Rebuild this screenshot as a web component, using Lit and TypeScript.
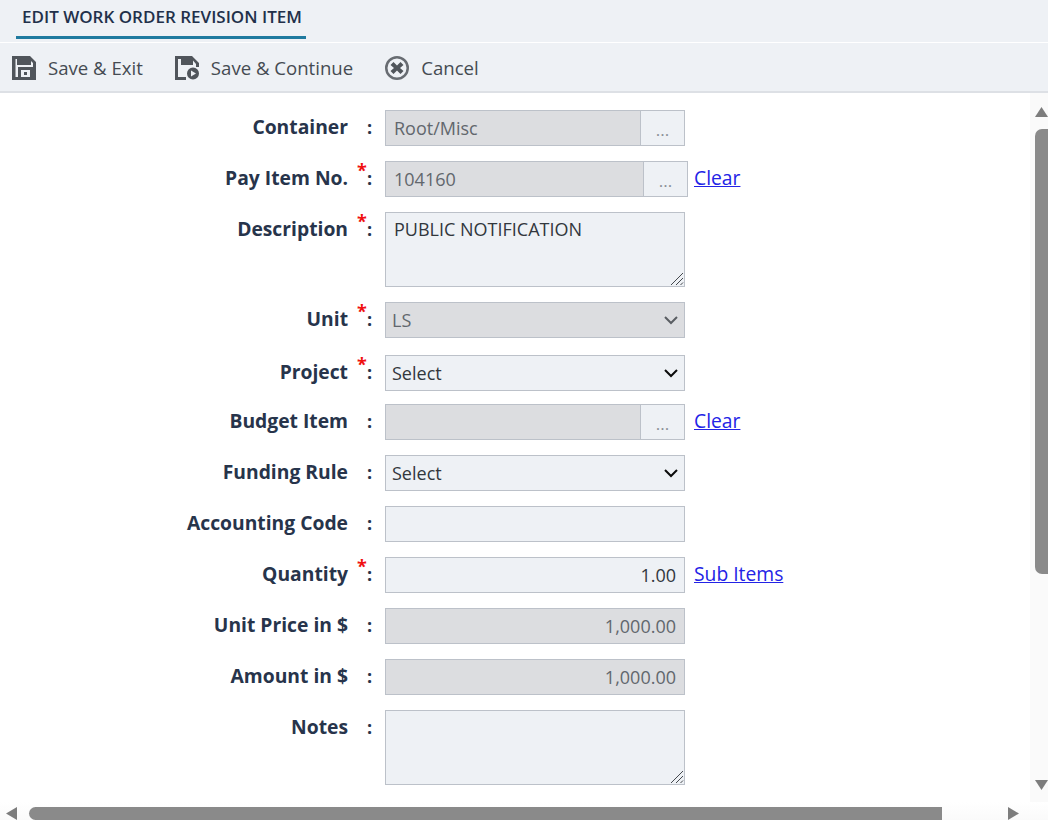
import { LitElement, css, html, nothing } from 'lit';
import { customElement } from 'lit/decorators.js';

type Row = {
  label: string;
  required?: boolean;
  kind: 'lookup' | 'text' | 'area' | 'select';
  value?: string;
  disabled?: boolean;
  wide?: boolean;
  number?: boolean;
  link?: string;
  shift?: boolean;
};

const rows: Row[] = [
  { label: 'Container', kind: 'lookup', value: 'Root/Misc' },
  { label: 'Pay Item No.', required: true, kind: 'lookup', value: '104160', wide: true, link: 'Clear' },
  { label: 'Description', required: true, kind: 'area', value: 'PUBLIC NOTIFICATION' },
  { label: 'Unit', required: true, kind: 'select', value: 'LS', disabled: true },
  { label: 'Project', required: true, kind: 'select', value: 'Select', shift: true },
  { label: 'Budget Item', kind: 'lookup', value: '', link: 'Clear' },
  { label: 'Funding Rule', kind: 'select', value: 'Select' },
  { label: 'Accounting Code', kind: 'text', value: '' },
  { label: 'Quantity', required: true, kind: 'text', value: '1.00', number: true, link: 'Sub Items' },
  { label: 'Unit Price in $', kind: 'text', value: '1,000.00', number: true, disabled: true },
  { label: 'Amount in $', kind: 'text', value: '1,000.00', number: true, disabled: true },
  { label: 'Notes', kind: 'area', value: '' },
];

@customElement('app-root')
export class AppRoot extends LitElement {
  static styles = css`
    :host {
      display: flex;
      flex-direction: column;
      width: 1048px;
      height: 820px;
      overflow: hidden;
      background: #fff;
      font-family: 'Open Sans', sans-serif;
      color: #27344b;
    }
    .tabs {
      height: 42px;
      flex: none;
      box-sizing: border-box;
      padding-left: 16px;
      background: #eef1f5;
    }
    .tab {
      display: inline-block;
      box-sizing: border-box;
      width: 290px;
      height: 39px;
      padding: 7px 0 0 6px;
      border-bottom: 3px solid #1f7a9f;
      font-size: 17px;
      line-height: 20px;
      font-weight: 600;
      color: #22304a;
      white-space: nowrap;
    }
    .toolbar {
      height: 50px;
      flex: none;
      box-sizing: border-box;
      margin-top: 1px;
      padding-top: 1px;
      display: flex;
      align-items: center;
      background: #eef1f5;
      border-bottom: 2px solid #dde0e5;
      font-size: 18.6px;
      color: #454b52;
    }
    .tool {
      display: flex;
      align-items: center;
      gap: 12px;
      white-space: nowrap;
    }
    .tool svg {
      display: block;
      fill: #50555b;
    }
    .tool.save { margin-left: 12px; }
    .tool.cont { margin-left: 32px; }
    .tool.cancel { margin-left: 32px; }
    .middle {
      flex: 1;
      min-height: 0;
      display: flex;
    }
    .form {
      flex: 1;
      box-sizing: border-box;
      padding-top: 17px;
      display: flex;
      flex-direction: column;
      gap: 15px;
    }
    .row {
      display: grid;
      grid-template-columns: 348px 37px auto auto;
      justify-content: start;
      font-size: 18px;
    }
    .row.shift {
      margin: 2px 0 -2px;
    }
    .label {
      text-align: right;
      font-size: 19.3px;
      font-weight: 700;
      line-height: 24px;
      padding-top: 5px;
      color: #27344b;
    }
    .colon {
      position: relative;
      font-weight: 700;
      line-height: 24px;
      padding-top: 5px;
      padding-left: 19px;
      color: #27344b;
    }
    .star {
      position: absolute;
      left: 9px;
      top: -3px;
      color: #f01010;
      font-size: 18px;
      font-weight: 700;
    }
    .control {
      box-sizing: border-box;
      width: 300px;
      height: 36px;
      margin: 0;
      padding: 0 8px;
      border: 1px solid #bcc1c9;
      border-radius: 0;
      outline: none;
      background: #eef1f5;
      color: #32373d;
      font: 400 18px 'Open Sans', sans-serif;
    }
    .control:disabled,
    .control[readonly] {
      background: #dcdde0;
      color: #62676d;
      opacity: 1;
    }
    .number { text-align: right; }
    .area {
      position: relative;
      width: 300px;
      height: 75px;
    }
    textarea.control {
      display: block;
      height: 75px;
      padding: 4px 8px;
      line-height: 24px;
      resize: none;
    }
    .grip {
      position: absolute;
      right: 1px;
      bottom: 1px;
      stroke: #45494e;
      stroke-width: 1;
      fill: none;
    }
    .lookup {
      display: flex;
      width: 300px;
    }
    .lookup.wide { width: 303px; }
    .lookup .control {
      flex: 1;
      width: auto;
      min-width: 0;
    }
    .dots {
      box-sizing: border-box;
      width: 45px;
      height: 36px;
      margin-left: -1px;
      border: 1px solid #bcc1c9;
      background: #eef1f5;
      color: #8a8f95;
      text-align: center;
      font-size: 17px;
      line-height: 37px;
    }
    .pick {
      position: relative;
      width: 300px;
    }
    .pick select {
      display: block;
      appearance: none;
      padding: 0 6px;
    }
    .pick svg {
      position: absolute;
      right: 6px;
      top: 12px;
      fill: none;
      stroke: #0c0c0c;
      stroke-width: 2;
    }
    .pick.off svg { stroke: #5a5e63; }
    a {
      margin-left: 9px;
      font-size: 19.3px;
      line-height: 24px;
      padding-top: 5px;
      color: #2323e6;
      text-decoration: underline;
    }
    .row.wide a { margin-left: 6px; }
    .vbar {
      flex: none;
      width: 18px;
      background: #fafafa;
      display: flex;
      flex-direction: column;
      align-items: flex-end;
    }
    .vbar .up { margin-top: 14px; }
    .vbar .thumb {
      width: 13px;
      height: 445px;
      margin-top: 12px;
      border-radius: 7px 0 0 7px / 7px 0 0 7px;
      background: #8a8a8a;
    }
    .vbar .down { margin-top: 206px; }
    .hbar {
      flex: none;
      height: 18px;
      box-sizing: border-box;
      padding: 5px 0 0 6px;
      display: flex;
      background: linear-gradient(#fff, #fafafa);
    }
    .hbar .thumb {
      width: 913px;
      height: 13px;
      margin-left: 12px;
      border-radius: 7px 0 0 7px;
      background: #8a8a8a;
    }
    .hbar .right { margin-left: 66px; }
    .arrow { display: block; fill: #7d7d7d; }
  `;

  renderControl(row: Row) {
    if (row.kind === 'lookup') {
      return html`<div class="lookup ${row.wide ? 'wide' : ''}">
        <input class="control" readonly .value=${row.value ?? ''} />
        <div class="dots">...</div>
      </div>`;
    }
    if (row.kind === 'area') {
      return html`<div class="area">
        <textarea class="control" .value=${row.value ?? ''}></textarea>
        <svg class="grip" width="14" height="14" viewBox="0 0 14 14">
          <path d="M1 13L13 1M6 13L13 6M10.500 13L13 10.500" />
        </svg>
      </div>`;
    }
    if (row.kind === 'select') {
      return html`<div class="pick ${row.disabled ? 'off' : ''}">
        <select class="control" ?disabled=${row.disabled}>
          <option>${row.value}</option>
        </select>
        <svg width="16" height="12" viewBox="0 0 16 12"><path d="M2 3 L8 9 L14 3" /></svg>
      </div>`;
    }
    return html`<input
      class="control ${row.number ? 'number' : ''}"
      ?disabled=${row.disabled}
      .value=${row.value ?? ''}
    />`;
  }

  renderRow(row: Row) {
    return html`<div class="row ${row.shift ? 'shift' : ''} ${row.wide ? 'wide' : ''}">
      <div class="label">${row.label}</div>
      <div class="colon">${row.required ? html`<span class="star">*</span>` : nothing}:</div>
      ${this.renderControl(row)}
      ${row.link ? html`<a href="#">${row.link}</a>` : nothing}
    </div>`;
  }

  render() {
    return html`
      <div class="tabs"><div class="tab">EDIT WORK ORDER REVISION ITEM</div></div>
      <div class="toolbar">
        <div class="tool save">
          <svg width="24" height="24" viewBox="0 0 24 24">
            <path
              fill-rule="evenodd"
              d="M0 0H18L24 6V24H0ZM3.500 3V21H6V11H21V7L19 5V9H5V3ZM9 14V21H18V14ZM12 16H15V19H12Z"
            />
          </svg>
          Save &amp; Exit
        </div>
        <div class="tool cont">
          <svg width="24" height="24" viewBox="0 0 24 24">
            <path
              fill-rule="evenodd"
              d="M0 0H17L24 7V11H21V8L18 4.500V9H6V3H3V21H11V24H0Z"
            />
            <path
              fill-rule="evenodd"
              d="M18 11.500A6 6 0 1 1 18 23.500A6 6 0 1 1 18 11.500ZM16 14.500V20.500L21 17.500Z"
            />
          </svg>
          Save &amp; Continue
        </div>
        <div class="tool cancel">
          <svg width="24" height="24" viewBox="0 0 24 24">
            <path
              fill-rule="evenodd"
              opacity=".85"
              d="M12 0A12 12 0 1 1 12 24A12 12 0 1 1 12 0ZM12 2.500A9.500 9.500 0 1 0 12 21.500A9.500 9.500 0 1 0 12 2.500Z"
            />
            <path d="M8.500 6L12 9.500L15.500 6L18.500 9L15 12L18.500 15L15.500 18L12 14.500L8.500 18L5.500 15L9 12L5.500 9Z" />
          </svg>
          Cancel
        </div>
      </div>
      <div class="middle">
        <div class="form">${rows.map((row) => this.renderRow(row))}</div>
        <div class="vbar">
          <svg class="arrow up" width="13" height="10" viewBox="0 0 13 10"><path d="M6.500 0L13 10H0Z" /></svg>
          <div class="thumb"></div>
          <svg class="arrow down" width="13" height="10" viewBox="0 0 13 10"><path d="M0 0H13L6.500 10Z" /></svg>
        </div>
      </div>
      <div class="hbar">
        <svg class="arrow" width="11" height="13" viewBox="0 0 11 13"><path d="M11 0V13L0 6.500Z" /></svg>
        <div class="thumb"></div>
        <svg class="arrow right" width="11" height="13" viewBox="0 0 11 13"><path d="M0 0V13L11 6.500Z" /></svg>
      </div>
    `;
  }
}
